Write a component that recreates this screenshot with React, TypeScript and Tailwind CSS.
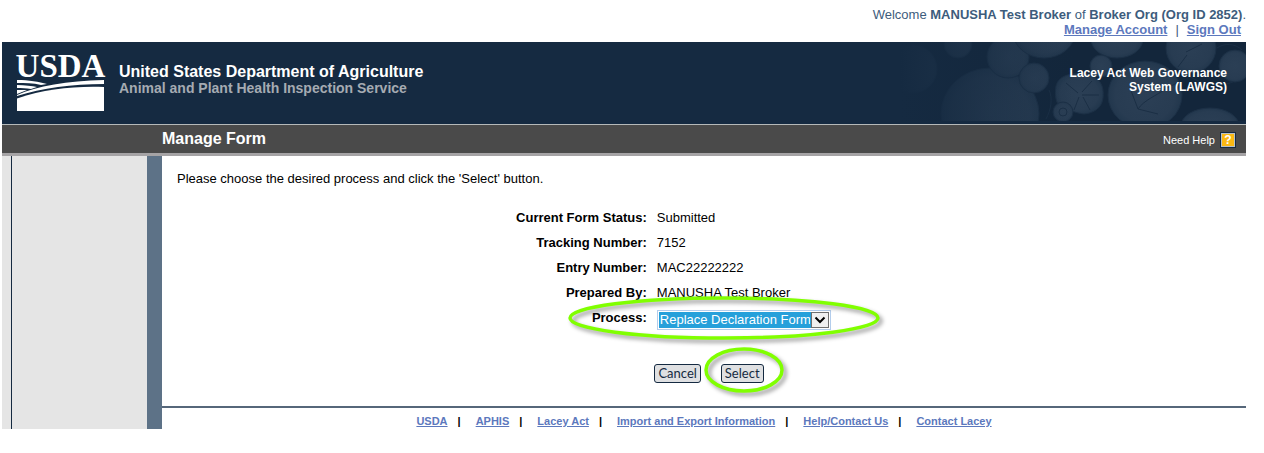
import React from "react";

const details = [
  { label: "Current Form Status:", value: "Submitted" },
  { label: "Tracking Number:", value: "7152" },
  { label: "Entry Number:", value: "MAC22222222" },
  { label: "Prepared By:", value: "MANUSHA Test Broker" },
];

const footerLinks = [
  "USDA",
  "APHIS",
  "Lacey Act",
  "Import and Export Information",
  "Help/Contact Us",
  "Contact Lacey",
];

function Logo() {
  return (
    <div className="flex w-[87px] shrink-0 flex-col items-center">
      <div className="h-[28px] font-['Liberation_Serif',serif] text-[33px] leading-[28px] text-white">USDA</div>
      <svg viewBox="0 0 87 31" className="block h-[31px] w-[87px]" aria-hidden="true">
        <g fill="#fff">
          <path d="M87 0 V4 C55 4 25 8 0 16 V15 C20 6 50 1 87 0 Z" />
          <path d="M0 0 C12 0 22 2 30 4 L24 5 C16 3 8 3 0 3 Z" />
          <path d="M0 5 C8 5 15 6 20 7 L14 9 C9 8 5 8 0 8 Z" />
          <path d="M0 10 L10 10 L0 14 Z" />
          <path d="M0 31 V18.5 C28 9 57 6 87 7 V31 Z" />
        </g>
      </svg>
    </div>
  );
}

function LogPattern() {
  return (
    <svg
      viewBox="0 0 346 79"
      className="absolute top-0 right-0 h-[79px] w-[346px]"
      aria-hidden="true"
    >
      <defs>
        <linearGradient id="fade" x1="0" x2="1" y1="0" y2="0">
          <stop offset="0" stopColor="#152a41" />
          <stop offset="0.25" stopColor="#152a41" stopOpacity="0.5" />
          <stop offset="0.5" stopColor="#152a41" stopOpacity="0" />
        </linearGradient>
        <radialGradient id="log">
          <stop offset="0" stopColor="#2b3f55" />
          <stop offset="0.8" stopColor="#283c52" />
          <stop offset="1" stopColor="#22374d" />
        </radialGradient>
      </defs>
      <rect width="346" height="79" fill="#13263b" />
      <g fill="url(#log)" stroke="#1c3046" strokeWidth="1">
        <circle cx="13" cy="27" r="24" />
        <circle cx="58" cy="2" r="14" />
        <ellipse cx="90" cy="72" rx="49" ry="46" />
        <circle cx="108" cy="15" r="21" />
        <ellipse cx="144" cy="-10" rx="31" ry="26" />
        <circle cx="134" cy="36" r="15" />
        <ellipse cx="217" cy="-3" rx="26" ry="19" />
        <circle cx="201" cy="24" r="11" />
        <path d="M156 44 C158 36 165 33 172 32 C180 30 190 31 195 35 C202 40 204 47 203 56 C202 65 195 71 184 72 C174 71 164 66 158 62 C155 57 155 50 156 44 Z" />
        <ellipse cx="245" cy="53" rx="37" ry="34" />
        <circle cx="291" cy="6" r="25" />
        <circle cx="335" cy="24" r="16" />
        <ellipse cx="310" cy="84" rx="29" ry="18" />
        <circle cx="163" cy="70" r="10" />
      </g>
      <g fill="none" stroke="#1b2f45" strokeWidth="1">
        <path d="M178 51 L166 41 M182 50 L192 39 M182 53 L199 53 M179 55 L174 68 M183 55 L190 68" />
        <path d="M230 46 L238 67 L258 72 M238 67 C244 58 256 54 267 46 L277 41 M286 10 L302 2 M287 13 L278 25" />
        <circle cx="163" cy="70" r="4" />
        <path d="M317 6 C324 1 335 1 342 8 M289 34 C302 43 320 45 333 40 M149 48 C153 56 151 68 146 77" />
      </g>
      <rect width="346" height="79" fill="url(#fade)" />
    </svg>
  );
}

function Highlight({ children, className }: { children: React.ReactNode; className: string }) {
  return (
    <div className={`relative ${className}`}>
      {children}
    </div>
  );
}

function FormAction({ children }: { children: React.ReactNode }) {
  return (
    <button
      type="button"
      className="h-[19px] rounded-[3px] border border-[#152a41] bg-[#dfe0e2] px-[3px] font-['Lato',sans-serif] text-[13px] leading-[17px] text-[#152a41]"
    >
      {children}
    </button>
  );
}

export default function App() {
  return (
    <div className="bg-white pr-[18px] pl-[2px] font-['Liberation_Sans',Arial,sans-serif] text-[13px] leading-[15px] text-black">
      <div className="pt-[7px] pb-[5px] text-right text-[#3d5c7c]">
        <p>
          Welcome <b>MANUSHA Test Broker</b> of <b>Broker Org (Org ID 2852)</b>.
        </p>
        <nav className="flex justify-end gap-2 pr-[5px]">
          <a href="#account" className="font-bold text-[#5c78bd] underline">Manage Account</a>
          <span>|</span>
          <a href="#signout" className="font-bold text-[#5c78bd] underline">Sign Out</a>
        </nav>
      </div>

      <header className="relative flex h-[82px] items-start justify-between bg-[#152a41] pt-[10px] pr-[19px] pl-[15px] font-bold">
        <LogPattern />
        <div className="flex gap-[15px]">
          <Logo />
          <div className="pt-[11px] leading-[17px]">
            <p className="text-[16px] text-white">United States Department of Agriculture</p>
            <p className="text-[14px] text-[#a5abb2]">Animal and Plant Health Inspection Service</p>
          </div>
        </div>
        <p className="relative pt-[14px] text-right text-[12px] leading-[14px] text-white">
          Lacey Act Web Governance
          <br />
          System (LAWGS)
        </p>
      </header>

      <div className="flex h-[32px] items-center justify-between border-t border-b-3 border-t-[#b5b9b9] border-b-[#a5a3a5] bg-[#4a4a4a] pr-[10px] pl-[160px] text-white">
        <h1 className="pb-[2px] text-[16px] font-bold">Manage Form</h1>
        <a href="#help" className="flex items-center gap-[5px] pt-[2px] text-[11px]">
          Need Help
          <span className="flex h-4 w-4 items-center justify-center border border-[#152a41] bg-[#b9c0c6] p-px">
            <span className="h-3 w-3 bg-[#fbb813] text-center text-[12px] leading-3 font-bold">?</span>
          </span>
        </a>
      </div>

      <div className="flex">
        <aside className="w-[160px] shrink-0 border-r-[15px] border-[#5d7287] bg-[#e5e5e5] pl-[9px]">
          <div className="h-full border-l border-[#152a41]" />
        </aside>
        <div className="flex-1">
          <main className="px-[15px] pt-[15px] pb-[23px]">
            <p>Please choose the desired process and click the 'Select' button.</p>
            <div className="grid grid-cols-[9fr_11fr] gap-x-[10px] gap-y-[10px] pt-[24px]">
              {details.map((d) => (
                <React.Fragment key={d.label}>
                  <span className="text-right font-bold">{d.label}</span>
                  <span>{d.value}</span>
                </React.Fragment>
              ))}
              <label htmlFor="process" className="text-right font-bold">
                Process:
              </label>
              <Highlight className="w-fit">
                <div className="flex h-5 w-[174px] border border-[#b3cdec] bg-white p-px">
                  <select
                    id="process"
                    className="w-[152px] appearance-none bg-[#26a0da] px-px text-[13px] leading-4 text-white outline-none"
                  >
                    <option>Replace Declaration Form</option>
                  </select>
                  <span className="pointer-events-none flex flex-1 items-center justify-center border border-[#707070] bg-[#f0f0f0]">
                    <svg viewBox="0 0 12 8" className="h-2 w-3" aria-hidden="true">
                      <path d="M1.5 1.5 L6 6 L10.5 1.5" fill="none" stroke="#000" strokeWidth="2" />
                    </svg>
                  </span>
                </div>
                <svg
                  viewBox="0 0 322 54"
                  className="pointer-events-none absolute top-[-16px] left-[-90px] h-[54px] w-[322px] drop-shadow-[3px_3px_2px_rgba(0,0,0,0.4)]"
                  aria-hidden="true"
                >
                  <ellipse cx="157" cy="24" rx="154" ry="20" fill="none" stroke="#80ff00" strokeWidth="3.5" />
                </svg>
              </Highlight>
            </div>
            <div className="flex justify-center gap-5 pt-[34px] pl-[10px]">
              <FormAction>Cancel</FormAction>
              <Highlight className="flex">
                <FormAction>Select</FormAction>
                <svg
                  viewBox="0 0 86 54"
                  className="pointer-events-none absolute top-[-18px] left-[-18px] h-[54px] w-[86px] drop-shadow-[3px_3px_2px_rgba(0,0,0,0.4)]"
                  aria-hidden="true"
                >
                  <ellipse cx="41" cy="24" rx="38" ry="21" fill="none" stroke="#80ff00" strokeWidth="3.5" />
                </svg>
              </Highlight>
            </div>
          </main>
          <footer className="flex justify-center gap-[10px] border-t-2 border-[#56677a] pt-[7px] pb-[1px] text-[11px] leading-[13px] font-bold">
            {footerLinks.map((name, i) => (
              <React.Fragment key={name}>
                {i > 0 && <span className="pr-[5px]">|</span>}
                <a href="#footer" className="text-[#5c78bd] underline">
                  {name}
                </a>
              </React.Fragment>
            ))}
          </footer>
        </div>
      </div>
    </div>
  );
}
